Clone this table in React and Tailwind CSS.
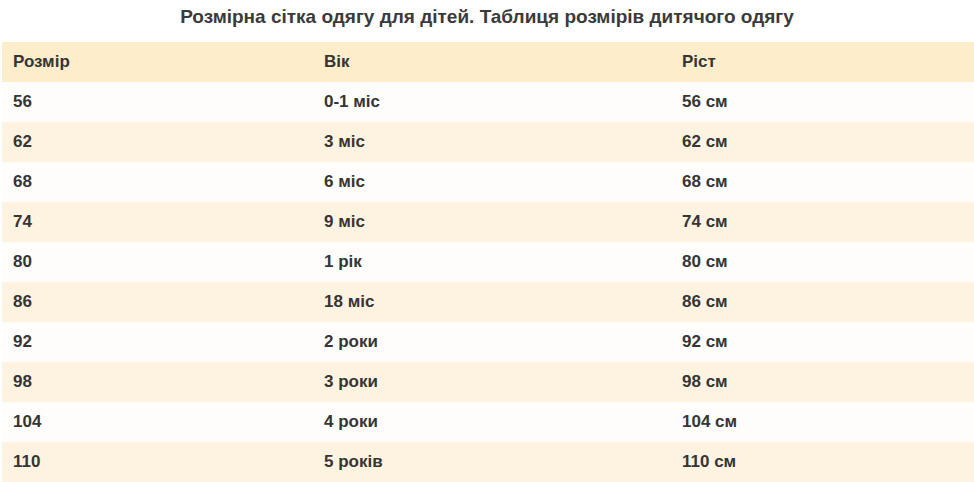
import React from 'react';

const rows = [
  ['56', '0-1 міс', '56 см'],
  ['62', '3 міс', '62 см'],
  ['68', '6 міс', '68 см'],
  ['74', '9 міс', '74 см'],
  ['80', '1 рік', '80 см'],
  ['86', '18 міс', '86 см'],
  ['92', '2 роки', '92 см'],
  ['98', '3 роки', '98 см'],
  ['104', '4 роки', '104 см'],
  ['110', '5 років', '110 см'],
];

export default function App() {
  return (
    <div className="min-h-screen bg-white font-['Liberation_Sans',Arial,sans-serif] text-[#353535]">
      <h2 className="h-[42px] pt-[6px] text-center text-[19px] font-bold leading-[22px] text-[#3a3a3a]">
        Розмірна сітка одягу для дітей. Таблиця розмірів дитячого одягу
      </h2>
      <table className="ml-[2px] w-[972px] border-collapse text-[17px] font-bold">
        <thead>
          <tr className="h-[40px] bg-[#fdedca]">
            <th className="w-[311px] pl-[11px] text-left font-bold">Розмір</th>
            <th className="w-[358px] pl-[11px] text-left font-bold">Вік</th>
            <th className="pl-[11px] text-left font-bold">Ріст</th>
          </tr>
        </thead>
        <tbody>
          {rows.map((r, i) => (
            <tr key={r[0]} className={`h-[40px] ${i % 2 ? 'bg-[#fdf3e0]' : 'bg-[#fefdfb]'}`}>
              <td className="pl-[11px]">{r[0]}</td>
              <td className="pl-[11px]">{r[1]}</td>
              <td className="pl-[11px]">{r[2]}</td>
            </tr>
          ))}
        </tbody>
      </table>
    </div>
  );
}
